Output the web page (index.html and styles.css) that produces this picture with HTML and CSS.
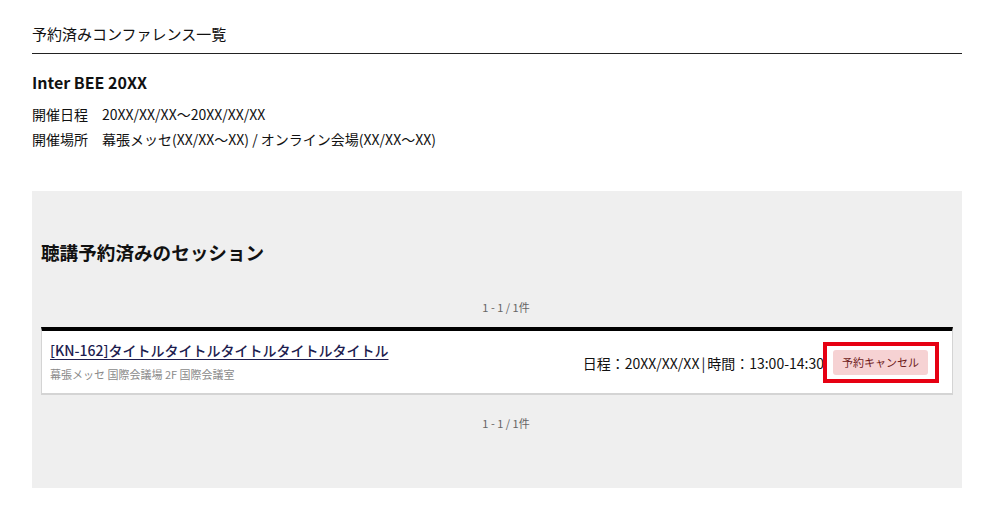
FILE: index.html
```html
<!DOCTYPE html>
<html lang="ja">
<head>
<meta charset="utf-8">
<link rel="stylesheet" href="styles.css">
</head>
<body>
<div class="page">
  <div class="page-title">予約済みコンファレンス一覧</div>
  <div class="event">
    <h2 class="event-name">Inter BEE 20XX</h2>
    <div class="event-row"><span class="label">開催日程</span><span>20XX/XX/XX～20XX/XX/XX</span></div>
    <div class="event-row"><span class="label">開催場所</span><span>幕張メッセ(XX/XX～XX) / オンライン会場(XX/XX～XX)</span></div>
  </div>
  <section class="sessions">
    <h3 class="sessions-title">聴講予約済みのセッション</h3>
    <div class="pager">1 - 1 / 1件</div>
    <div class="card">
      <div class="card-main">
        <a class="card-title" href="#">[KN-162]タイトルタイトルタイトルタイトルタイトル</a>
        <div class="card-place">幕張メッセ 国際会議場 2F 国際会議室</div>
      </div>
      <div class="card-time">日程：20XX/XX/XX<span class="sep">|</span>時間：13:00-14:30</div>
      <div class="cancel-wrap"><button class="cancel">予約キャンセル</button></div>
    </div>
    <div class="pager pager-bottom">1 - 1 / 1件</div>
  </section>
</div>
</body>
</html>
```
FILE: styles.css
```css
* { box-sizing: border-box; }
html, body { margin: 0; padding: 0; background: #fff; }
body {
  font-family: "Noto Sans CJK JP", "Noto Sans", sans-serif;
  color: #111;
}
.page { padding: 0 38px 0 32px; }
.page-title {
  font-size: 15px;
  line-height: 20px;
  padding-top: 24px;
  padding-bottom: 9px;
  border-bottom: 1px solid #222;
}
.event { padding-top: 16px; }
.event-name {
  margin: 0 0 8px;
  font-size: 16px;
  line-height: 24px;
  font-weight: 700;
}
.event-row {
  font-size: 14px;
  line-height: 25px;
  display: flex;
}
.event-row .label { width: 70px; }
.sessions {
  margin-top: 39px;
  background: #efefef;
  padding: 45px 9px 56px;
  height: 297px;
}
.sessions-title {
  margin: 0;
  font-size: 18.6px;
  line-height: 32px;
  font-weight: 700;
}
.pager {
  text-align: center;
  font-size: 11px;
  line-height: 16px;
  color: #666;
  margin-top: 31px;
  margin-bottom: 12px;
  padding-left: 18px;
}
.pager-bottom { margin-top: 20px; margin-bottom: 0; }
.card {
  background: #fff;
  border-top: 4px solid #000;
  border-left: 1px solid #d4d4d4;
  border-right: 1px solid #d4d4d4;
  border-bottom: 2px solid #d4d4d4;
  display: flex;
  align-items: center;
  padding: 7px 0 8px 8px;
  height: 68px;
}
.card-main { flex: 1; padding-bottom: 4px; }
.card-title {
  font-size: 14px;
  line-height: 22px;
  font-weight: 500;
  color: #1d1d4f;
  text-decoration: underline;
  text-underline-offset: 3px;
}
.card-place {
  font-size: 11px;
  line-height: 16px;
  color: #8a8a8a;
  margin-top: 5px;
}
.card-time {
  font-size: 14px;
  line-height: 20px;
  margin-top: 2px;
}
.card-time .sep { margin: 0 2px; }
.cancel-wrap {
  margin-left: -1px;
  margin-right: 13px;
  border: 4px solid #e60012;
  padding: 4px 7px 4px 6px;
  margin-top: 1px;
}
.cancel {
  font-family: inherit;
  font-size: 11px;
  line-height: 15px;
  color: #6e1a1a;
  background: #f6d2d3;
  border: none;
  border-radius: 3px;
  padding: 5px 9px;
  display: block;
}
```
